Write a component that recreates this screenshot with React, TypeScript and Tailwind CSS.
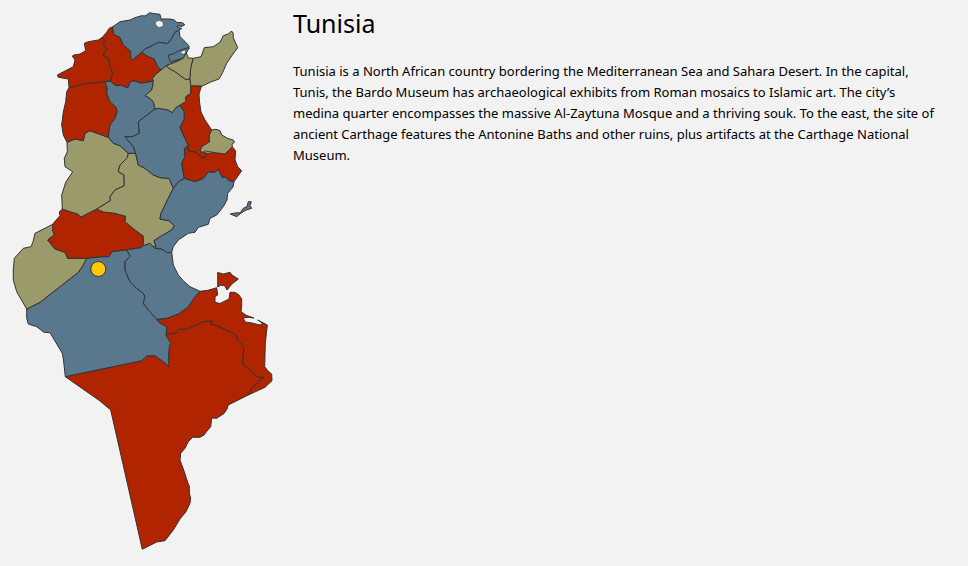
const BLUE = "#59788e";
const RED = "#b02400";
const OLIVE = "#9b9a6a";

type Region = { name: string; fill: string; points: string };

const regions: Region[] = [
  {
    name: "Tataouine",
    fill: RED,
    points:
      "65.3,376.7 141.7,360.7 146.7,356 155,355.7 169.3,366.3 168.3,360 169.3,346.7 170.7,342.7 166,335.7 166.7,334.3 175,333.3 179.3,329.3 186.7,329.3 203.3,321.7 212.3,320.7 211,324.3 218.3,326 236,335 238.3,340.7 244,346.7 242.7,364 258.3,377.3 264,377.3 255,385 251.7,388.3 248.3,395 228.3,405 227,409 224,413.5 216.7,418.3 211.7,418 210.7,426.7 207,431 204,435 200,437.3 192.7,437.3 188.3,441.7 185,448.3 180.7,453.3 180,460 184.3,471.7 188,483.3 189.3,486 189.3,493 190.7,498.3 190,503.3 186,511.7 180,519 173.3,530 165,540.7 156.7,542 142.3,549.3 110.7,410 100,401",
  },
  {
    name: "Medenine",
    fill: RED,
    points:
      "156.7,319.3 166.7,318.3 178.3,314 188.3,306.7 195,296.7 200,291.3 208,290.3 216.7,287.7 217.7,295 215,296.7 215,302.3 220,303.5 229,299 230,292.3 235,292.3 239,295 241.7,299 241.7,305 241,311.7 246.7,315.5 254,318 248,317.3 243.3,318 245,322 251,322.8 260,325 262.7,323.3 257.7,320 267.3,325 265.3,343.3 264.7,366.7 268,371 271.7,374 272,380.7 265,387.3 248.3,395 251.7,388.3 255,385 264,377.3 258.3,377.3 242.7,364 244,346.7 238.3,340.7 236,335 218.3,326 211,324.3 212.3,320.7 203.3,321.7 186.7,329.3 179.3,329.3 175,333.3 166.7,334.3 166.7,326.7 159.3,322.7",
  },
  {
    name: "Djerba",
    fill: RED,
    points: "217.7,272.5 223.3,274 230,272.3 232,275 238.3,279 231.7,284.3 227,290 225,286 221,285 217.7,287",
  },
  {
    name: "Kebili",
    fill: BLUE,
    points:
      "26.7,309 40,302.3 78.3,272.3 83.3,265 86.7,258.3 101.7,256.7 109,256.7 111.7,251.7 126.7,249.7 130.3,256.3 125,261.7 125,270 130,281.7 136.7,288.3 143.3,293.3 145,296.7 143.3,303.3 148.3,310 156.7,319.3 159.3,322.7 166.7,326.7 166,335.7 170.7,342.7 169.3,346.7 168.3,360 169.3,366.3 155,355.7 146.7,356 141.7,360.7 65.3,376.7 63.5,360 62.3,353.3 50,332.7 44,332.3 36.7,326.7 28.3,324 26.7,318.3",
  },
  {
    name: "Gabes",
    fill: BLUE,
    points:
      "126.7,249.7 140,247.7 143.3,245.7 150,243.3 155,248.3 161.7,249 167.3,252.7 171.7,252.3 173.3,265 178.3,275 184,281.5 190,286.7 200,291.3 195,296.7 188.3,306.7 178.3,314 166.7,318.3 156.7,319.3 148.3,310 143.3,303.3 145,296.7 143.3,293.3 136.7,288.3 130,281.7 125,270 125,261.7 130.3,256.3",
  },
  {
    name: "Tozeur",
    fill: OLIVE,
    points:
      "53.3,224 35,233.3 33,242 31,246.7 23.3,248.3 14.3,258.3 13.3,270 13.3,280 16.7,291.7 26.7,309 40,302.3 78.3,272.3 83.3,265 86.7,258.3 67.7,258.3 65,252.3 55,249 47.7,240 54.3,235 52.7,230",
  },
  {
    name: "Gafsa",
    fill: RED,
    points:
      "62.3,209 70,211.7 77.7,214 81,217 96.7,209 103.3,212 115,213.3 123.3,215.7 125.7,216 125,221.7 135,230 143.3,236 143.3,245.7 140,247.7 126.7,249.7 111.7,251.7 109,256.7 101.7,256.7 86.7,258.3 67.7,258.3 65,252.3 55,249 47.7,240 54.3,235 52.7,230 53.3,223.3 60,215.7 59.3,212",
  },
  {
    name: "Kasserine",
    fill: OLIVE,
    points:
      "67,142.3 75,139 83.3,140.7 85,133.3 90,130.7 99,134 108.3,137.3 113.3,143.3 120,145.7 128.3,153.3 127.3,157.7 120,165 118.3,171.7 124,175 124.3,185.7 115,190 110,196.7 110.5,200.5 96.7,209 81,217 77.7,214 70,211.7 62.3,209 61.7,195 65.7,182.3 72.7,171.7 65,166.7 64.3,158.3 67.3,151.7",
  },
  {
    name: "Sidi Bouzid",
    fill: OLIVE,
    points:
      "128.3,153.3 135.7,153.3 138.3,165 145,168.3 153.3,175 160,177.7 169,178.3 173.3,188.3 168.3,198.3 160.7,214 160,219 169,220.7 174.3,225.7 171.7,230 160,236.7 154,240.7 156,246.7 153.3,246.7 150,243.3 143.3,245.7 143.3,236 135,230 125,221.7 125.7,216 123.3,215.7 115,213.3 103.3,212 96.7,209 110.5,200.5 110,196.7 115,190 124.3,185.7 124,175 118.3,171.7 120,165 127.3,157.7",
  },
  {
    name: "Sfax",
    fill: BLUE,
    points:
      "173.3,188.3 178.3,181.7 184.3,178.3 195,181.7 203.3,178.3 208.3,171.7 215,172.3 218.3,169 222.3,177.7 225,176.7 229,180.5 234,181.7 233,187 227.7,193.3 227,200 223.3,206.7 216.7,215 210,218.3 208.3,224.3 198.3,227.3 195,232.3 188.3,233.3 178.3,240 173.3,246.7 171.7,252.3 167.3,252.7 161.7,249 155,248.3 156,246.7 154,240.7 160,236.7 171.7,230 174.3,225.7 169,220.7 160,219 160.7,214 168.3,198.3",
  },
  {
    name: "Kef",
    fill: RED,
    points:
      "69,87.3 75,86.7 81.7,84 105,81.7 107.3,88.3 106.7,93.3 110,101.7 115.7,106.7 117.3,111.7 115,118.3 110,125 108.3,137.3 99,134 90,130.7 85,133.3 83.3,140.7 75,139 67,142.3 63.3,135 61.7,125 63.3,112 65.7,101.7 66.7,92",
  },
  {
    name: "Siliana",
    fill: BLUE,
    points:
      "105,81.7 110.3,81 116,85.7 121,85 127.7,87.7 130,82 134,80.7 141.7,83 153.3,81 153.3,83.3 151.7,90 145,95.7 149,97.7 153.3,101.7 155,109 138.3,121.7 139.3,133.3 132.3,136.7 125,136.7 133.3,146.7 135.7,153.3 128.3,153.3 120,145.7 113.3,143.3 108.3,137.3 110,125 115,118.3 117.3,111.7 115.7,106.7 110,101.7 106.7,93.3 107.3,88.3",
  },
  {
    name: "Kairouan",
    fill: BLUE,
    points:
      "155,109 158.3,108.3 168.3,110 172.3,112.7 175.7,107.7 180,105.5 184.3,111.7 184.3,119 180,127.5 188.3,145.7 184.3,148.3 185,156.7 181.7,163.3 184.3,178.3 178.3,181.7 173.3,188.3 169,178.3 160,177.7 153.3,175 145,168.3 138.3,165 135.7,153.3 133.3,146.7 125,136.7 132.3,136.7 139.3,133.3 138.3,121.7",
  },
  {
    name: "Mahdia",
    fill: RED,
    points:
      "184.3,148.3 188.3,145.7 188.3,150.7 196.7,152.3 201.7,157.7 205,157.3 206.7,153 215,153 225,154 232.3,146.7 235.7,151 235,160 237.7,166.7 241.7,170.7 234,181.7 229,180.5 225,176.7 222.3,177.7 218.3,169 215,172.3 208.3,171.7 203.3,178.3 195,181.7 184.3,178.3 181.7,163.3 185,156.7",
  },
  {
    name: "Sousse",
    fill: RED,
    points:
      "190.7,85.7 201.5,86 199,94 199.5,102 201,112 205,120 211.7,130 209.3,135 209.3,142 201.7,146.7 200,151 203,152 206.7,153 205,157.3 201.7,157.7 196.7,152.3 188.3,150.7 188.3,145.7 180,127.5 184.3,119 184.3,111.7 180,105.5 185.7,101.7 185.7,96.7 190.7,93.3",
  },
  {
    name: "Monastir",
    fill: OLIVE,
    points:
      "211.7,130 216,129.3 220,130.7 221.7,135 228,138.5 233.3,140 234.5,142.3 232,144 232.3,146.7 225,154 215,152.7 205,151 202.3,152.3 200,151 201.7,146.7 209.3,142 209.3,135",
  },
  {
    name: "Zaghouan",
    fill: OLIVE,
    points:
      "166,65.7 170,69 175,71.7 185.7,79.5 190,79 190.7,85.7 190.7,93.3 185.7,96.7 185.7,101.7 180,105 175.7,107.7 172.3,112.7 168.3,110 158.3,108.3 155,109 153.3,101.7 149,97.7 145,95.7 151.7,90 153.3,83.3 152.3,78.3 156.7,73.3 161,70",
  },
  {
    name: "Jendouba",
    fill: RED,
    points:
      "57.3,75 73.3,66.7 75,60 72.3,56 74,55 80,54 85.7,50.7 84.3,43.3 88.3,41.7 98.3,40 102.3,37.3 105,40.7 103.3,44 107,48.7 105,51.7 103,55.3 108.3,57.7 110,66.7 112.7,73.3 110.3,81 105,81.7 81.7,84 75,86.7 69,87.3 68.3,79 58.3,77.3",
  },
  {
    name: "Beja",
    fill: RED,
    points:
      "102.3,37.3 106.7,32.3 109,28.5 112.7,26.7 113.7,34.3 120,37.3 123.3,45 130.7,51 130.7,57.7 132.7,59.7 141.7,52.3 147,56 154.3,59 156.7,65 161,70 156.7,73.3 152.3,78.3 153.3,81 141.7,83 134,80.7 130,82 127.7,87.7 121,85 116,85.7 110.3,81 112.7,73.3 110,66.7 108.3,57.7 103,55.3 105,51.7 107,48.7 103.3,44 105,40.7",
  },
  {
    name: "Bizerte",
    fill: BLUE,
    points:
      "112.7,26.7 120,21.7 130,20 135,17.7 141.7,15.7 145,16 150,12.7 153.3,13.5 160,14.3 161,19 170,19 174.3,20 176.7,22.3 182.3,22.7 184.8,24.7 182,26.3 177,26 178,27.7 182,28.3 179,30 175,32.3 171.7,38.3 167.7,43.5 158.3,42.3 152.3,45.7 145,49 141.7,52.3 132.7,59.7 130.7,57.7 130.7,51 123.3,45 120,37.3 113.7,34.3",
  },
  {
    name: "Ariana and Manouba",
    fill: BLUE,
    points:
      "179,30 180,36.7 186.7,43.3 189.3,46.7 186.7,52 183.3,58.3 175,62.3 166,65.7 161,70 156.7,65 154.3,59 147,56 141.7,52.3 145,49 152.3,45.7 158.3,42.3 167.7,43.5 171.7,38.3 175,32.3",
  },
  {
    name: "Tunis",
    fill: BLUE,
    points: "168.3,55 173.3,54 178.3,51 188.5,47.5 189.3,48 186.7,52 183.3,58.3 176.7,60 171,62 169.3,60",
  },
  {
    name: "Ben Arous",
    fill: OLIVE,
    points: "166,65.7 175,62.3 183.3,58.3 186.3,52.7 188.3,58 193.3,58.3 190.7,68.3 190,79 185.7,79.5 175,71.7 170,69",
  },
  {
    name: "Nabeul",
    fill: OLIVE,
    points:
      "193.3,58.3 201,56.7 204.3,47.7 213.3,46.7 220,42.3 223.3,35.7 228.3,34 231,31.3 233,32.3 233.3,37.7 237.7,47.7 232.3,55 226.7,63.3 222.3,73.3 219,79 210,82.3 202.3,86 190.7,85.7 190,79 190.7,68.3",
  },
  {
    name: "Kerkennah",
    fill: BLUE,
    points:
      "230.3,214 236.7,212.7 240,213 243.3,208.3 247,206.5 248.3,201.7 251.3,201.7 250,205.5 251.7,208.3 246,210 240.5,213.5 236.7,216.7",
  },
];

const lagoons = [
  "155.3,22 159,20.2 163,22 163.3,26 159,27.7 155.8,25",
  "180.8,51.5 185.7,50 185.2,53.5 182,54.3",
];

function TunisiaMap() {
  return (
    <svg
      viewBox="10 10 270 545"
      className="ml-2.5 h-auto w-[270px] shrink-0"
      role="img"
      aria-label="Map of Tunisia"
    >
      <g stroke="#333333" strokeWidth="1" strokeLinejoin="round">
        {regions.map((region) => (
          <polygon key={region.name} points={region.points} fill={region.fill} />
        ))}
        {lagoons.map((points) => (
          <polygon key={points} points={points} fill="#f2f2f2" strokeOpacity="0.5" />
        ))}
        <circle cx="98.3" cy="269" r="7.5" fill="#ffc80a" />
      </g>
    </svg>
  );
}

export default function App() {
  return (
    <main className="flex min-h-screen items-start bg-[#f2f2f2] pt-2.5 font-['Noto_Sans','Open_Sans',sans-serif] text-black">
      <TunisiaMap />
      <article className="min-w-0 flex-1 pl-[13px] pr-7">
        <h1 className="text-[25px] leading-[26px]">Tunisia</h1>
        <p className="mt-[25px] text-[13px] leading-[21px]">
          Tunisia is a North African country bordering the Mediterranean Sea and Sahara Desert. In the capital,
          Tunis, the Bardo Museum has archaeological exhibits from Roman mosaics to Islamic art. The city’s medina
          quarter encompasses the massive Al-Zaytuna Mosque and a thriving souk. To the east, the site of ancient
          Carthage features the Antonine Baths and other ruins, plus artifacts at the Carthage National Museum.
        </p>
      </article>
    </main>
  );
}
